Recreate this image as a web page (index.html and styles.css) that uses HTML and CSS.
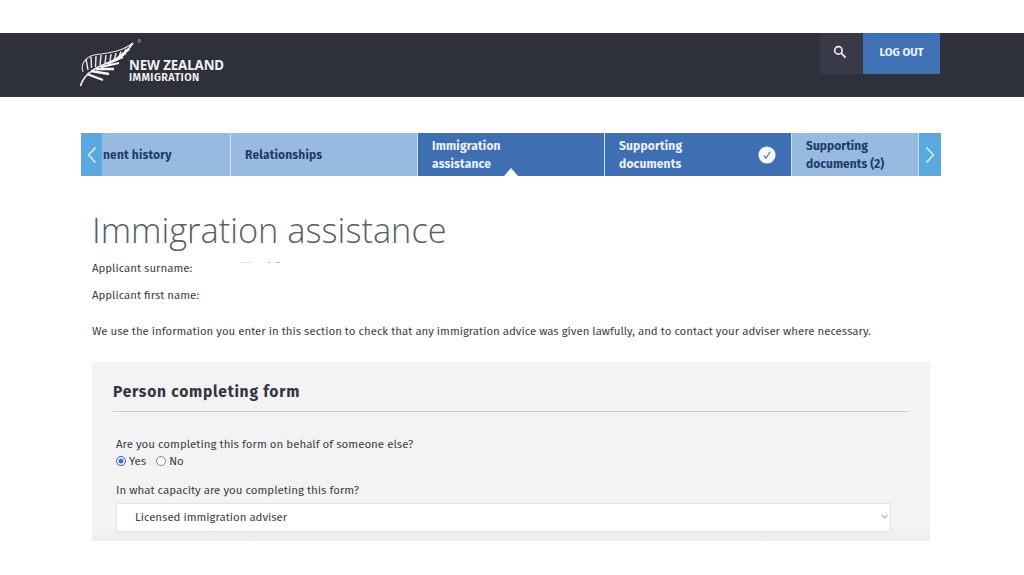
FILE: index.html
```html
<!DOCTYPE html>
<html lang="en">
<head>
<meta charset="utf-8">
<title>Immigration assistance</title>
<link rel="stylesheet" href="styles.css">
</head>
<body>
<div class="page">
  <header class="header">
    <div class="header-inner">
      <div class="logo">
        <svg class="fern" width="56" height="46" viewBox="0 0 56 46" aria-hidden="true">
          <path class="fern-stem" d="M0.500 45 C4 31 20 25 30 21 C40 17 48 10 53 2"/>
          <path class="fern-arch" d="M3 31 C0 23 6 16 14 14 C25 12 40 12 53 2"/>
          <path class="fern-upper" d="M8 29 L6 18 M11.500 27 L11 16 M15.500 26 L16 15 M20 24 L21 14 M25 22.500 L26 14 M30 20.500 L31 13 M34.500 18.500 L36 12 M39 16 L41 10.500 M44 12.500 L46 8"/>
          <path class="fern-lower" d="M7 33 L23 39 M11 30 L29 33 M16 28 L34 28 M21 26 L39 22 M27 23 L43 16 M33 20 L46 12 M38 17 L49 8"/>
        </svg>
        <sup class="reg">®</sup>
        <div class="wordmark">
          <span class="wm-top">NEW ZEALAND</span>
          <span class="wm-bottom">IMMIGRATION</span>
        </div>
      </div>
      <div class="actions">
        <div class="search">
          <svg width="14" height="14" viewBox="0 0 14 14" aria-hidden="true">
            <circle class="search-icon" cx="5.400" cy="5.400" r="3.700"/>
            <path class="search-icon" d="M8.200 8.200 L12.600 12.600"/>
          </svg>
        </div>
        <div class="logout">LOG OUT</div>
      </div>
    </div>
  </header>

  <nav class="tabs">
    <div class="arrow">
      <svg width="10" height="18" viewBox="0 0 10 18" aria-hidden="true"><path class="chev" d="M8.500 1.500 L1.500 9 L8.500 16.500"/></svg>
    </div>
    <div class="tab tab-first"><span class="clip">nent history</span></div>
    <div class="tab tab-wide"><span>Relationships</span></div>
    <div class="tab tab-wide tab-on tab-current"><span>Immigration<br>assistance</span></div>
    <div class="tab tab-wide tab-on"><span>Supporting<br>documents</span>
      <svg class="done" width="18" height="18" viewBox="0 0 18 18" aria-hidden="true">
        <circle class="done-disc" cx="9" cy="9" r="8.600"/>
        <path class="done-tick" d="M5.800 9.400 L8 12 L12.200 5.800"/>
      </svg>
    </div>
    <div class="tab tab-last"><span>Supporting<br>documents (2)</span></div>
    <div class="arrow arrow-right">
      <svg width="10" height="18" viewBox="0 0 10 18" aria-hidden="true"><path class="chev" d="M1.500 1.500 L8.500 9 L1.500 16.500"/></svg>
    </div>
  </nav>

  <main class="main">
    <h1 class="title">Immigration assistance</h1>
    <p class="meta">Applicant surname:<span class="smudge"></span></p>
    <p class="meta">Applicant first name:</p>
    <p class="intro">We use the information you enter in this section to check that any immigration advice was given lawfully, and to contact your adviser where necessary.</p>

    <section class="panel">
      <h2 class="panel-title">Person completing form</h2>
      <div class="fields">
        <p class="label">Are you completing this form on behalf of someone else?</p>
        <div class="radios">
          <span class="radio radio-on"></span><span class="radio-text">Yes</span>
          <span class="radio"></span><span class="radio-text">No</span>
        </div>
        <p class="label label-second">In what capacity are you completing this form?</p>
        <div class="select">
          <span>Licensed immigration adviser</span>
          <svg width="7" height="5" viewBox="0 0 7 5" aria-hidden="true"><path class="select-chev" d="M0.700 1 L3.500 3.800 L6.300 1"/></svg>
        </div>
      </div>
    </section>
  </main>
</div>
</body>
</html>
```

FILE: styles.css
```css
* { box-sizing: border-box; }
html, body { margin: 0; padding: 0; background: #fff; }
body { font-family: "Fira Sans", "Noto Sans", "Open Sans", sans-serif; color: #3a3d48; }
.page { width: 1024px; height: 575px; overflow: hidden; padding-top: 33px; }

.header { height: 64px; background: #2e303c; }
.header-inner { width: 860px; margin-left: 81px; display: flex; justify-content: space-between; align-items: flex-start; }
.logo { display: flex; align-items: flex-start; position: relative; padding-top: 8px; }
.fern { display: block; flex: none; margin-left: -1px; }
.fern-stem { fill: none; stroke: #f4f4f4; stroke-width: 1.6; }
.fern-arch { fill: none; stroke: #e4e4e6; stroke-width: 1.1; }
.fern-upper { fill: none; stroke: #e4e4e6; stroke-width: 1.5; }
.fern-lower { fill: none; stroke: #f6f6f6; stroke-width: 2.3; }
.reg { position: absolute; left: 56px; top: 5px; font-size: 7px; line-height: 8px; color: #a9aab2; margin: 0; }
.wordmark { display: flex; flex-direction: column; margin-left: -7px; margin-top: 18px; color: #f2f2f2; }
.wm-top { font-family: "Noto Sans", sans-serif; font-weight: 700; font-size: 13.3px; line-height: 13px; letter-spacing: -0.1px; white-space: nowrap; }
.wm-bottom { font-weight: 600; font-size: 10.8px; line-height: 11px; letter-spacing: 0.4px; white-space: nowrap; }
.actions { display: flex; margin-right: 1px; }
.search { width: 43px; height: 41px; background: #383a47; display: flex; align-items: center; justify-content: center; padding: 0 3px 4px 0; }
.search-icon { fill: none; stroke: #f0f0f0; stroke-width: 1.7; }
.logout { width: 77px; height: 41px; background: #3f71b5; color: #eef2f8; font-size: 11.2px; font-weight: 700; display: flex; align-items: center; justify-content: center; padding-bottom: 3px; }

.tabs { width: 860px; height: 43px; margin: 36px 0 0 81px; display: flex; }
.arrow { width: 21px; flex: none; background: #59a8e0; display: flex; align-items: center; justify-content: center; }
.arrow-right { width: 22.5px; }
.chev { fill: none; stroke: #e8f3fb; stroke-width: 1.4; }
.tab { background: #97bbe0; color: #1f3a68; font-size: 12px; font-weight: 700; line-height: 18px; display: flex; align-items: center; justify-content: space-between; border-right: 1px solid #cfe0f0; padding: 0 14.5px; letter-spacing: 0.18px; flex: none; position: relative; }
.tab-first { width: 128.5px; padding-left: 1px; }
.tab-wide { width: 187px; }
.tab-last { width: 127px; padding-right: 0; white-space: nowrap; letter-spacing: 0.05px; }
.tab-on { background: #3f6fb3; color: #eef2f8; }
.tab-current::after { content: ""; position: absolute; left: 86px; bottom: 0; border-left: 7px solid transparent; border-right: 7px solid transparent; border-bottom: 8px solid #fff; }
.clip { white-space: nowrap; }
.done { flex: none; }
.done-disc { fill: #f6f8fb; }
.done-tick { fill: none; stroke: #3f6fb3; stroke-width: 1.1; }

.main { margin: 0 0 0 92px; width: 838px; }
.title { font-family: "Open Sans", sans-serif; font-weight: 300; font-size: 34.4px; line-height: 44px; margin: 32px 0 0; color: #5a5d66; white-space: nowrap; }
.meta { font-size: 11.43px; line-height: 16px; margin: 0 0 11px; color: #3a3d48; position: relative; }
.meta:first-of-type { margin-top: 8px; }
.smudge { position: absolute; left: 148px; top: 2px; width: 40px; height: 1px; background: linear-gradient(90deg, #e4e4e4 30%, transparent 30%, transparent 70%, #bdbdbd 70%, #bdbdbd 76%, transparent 76%, transparent 90%, #bdbdbd 90%); }
.intro { font-size: 11.43px; line-height: 16px; margin: 20px 0 0; color: #3a3d48; white-space: nowrap; }
.panel { background: linear-gradient(180deg, #f3f3f3 92%, #ececec 100%); height: 179px; margin-top: 23px; padding: 20px 21px 0; }
.panel-title { font-size: 15.6px; line-height: 20px; font-weight: 700; margin: 0; padding-bottom: 9px; border-bottom: 1px solid #cfcfd2; color: #343642; letter-spacing: 0.76px; }
.fields { padding: 0 18px 0 3px; }
.label { font-size: 11.5px; line-height: 16px; margin: 0; color: #3a3d48; }
.fields > .label:first-child { margin-top: 24px; }
.radios { display: flex; align-items: center; height: 18px; font-size: 11.43px; }
.radio { width: 10px; height: 10px; border-radius: 50%; border: 1px solid #85868c; background: #fff; flex: none; }
.radio-on { border-color: #3f6fd0; background: #3f6fd0; box-shadow: inset 0 0 0 1.5px #fff; }
.radio-text { margin: 0 10px 0 3px; }
.label-second { margin-top: 12px; }
.select { height: 29px; margin-top: 5px; background: #fff; border: 1px solid #e2e2e2; display: flex; align-items: center; justify-content: space-between; padding: 0 2px 2px 18px; font-size: 11.43px; color: #3a3d48; }
.select-chev { fill: none; stroke: #77787e; stroke-width: 1; }
```
